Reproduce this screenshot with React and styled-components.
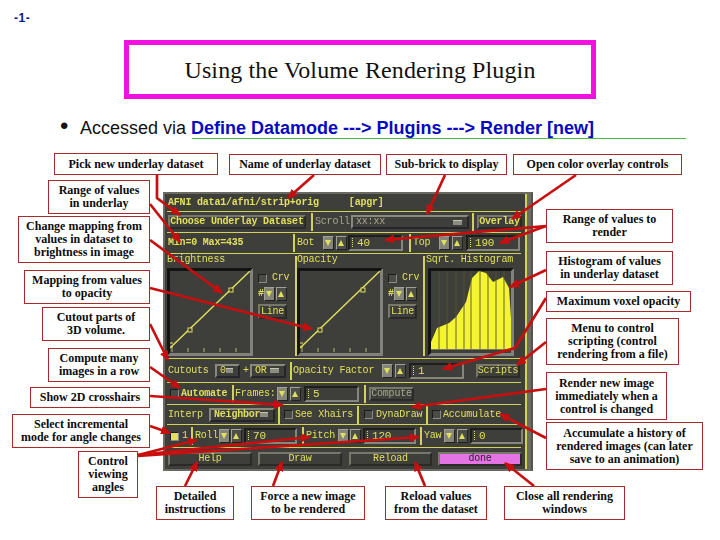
import React from "react";
import styled, { createGlobalStyle } from "styled-components";

const panelYellow = "#e0e05c";
const ruleYellow = "#d2d25a";
const panelBg = "#3e3e3a";
const arrowRed = "#c80f0f";
const boxRed = "#a82a2a";

const GlobalStyle = createGlobalStyle`
  html, body { margin: 0; padding: 0; background: #fff; }
`;

const Slide = styled.div`
  position: relative;
  width: 720px;
  height: 540px;
  overflow: hidden;
  background: #fff;
`;

const PageNumber = styled.div`
  height: 14px;
  padding: 11px 0 0 14px;
  font: bold 12px/14px "Liberation Sans", sans-serif;
  letter-spacing: 0.5px;
  color: #14148c;
`;

const TitleBox = styled.h1`
  box-sizing: border-box;
  width: 472px;
  height: 59px;
  margin: 15px 0 0 124px;
  border: 5px solid #f010e0;
  display: flex;
  align-items: center;
  justify-content: center;
  font: normal 24px/1 "Liberation Serif", serif;
  letter-spacing: 0.12px;
  color: #111;
`;

const BulletLine = styled.div`
  display: flex;
  align-items: baseline;
  height: 24px;
  margin: 15px 0 0 60px;
  font: 18px/24px "Liberation Sans", sans-serif;
  color: #111;
  white-space: pre;
`;

const Bullet = styled.span`
  width: 20px;
  font-size: 24px;
`;

const Path = styled.b`
  color: #0808c0;
`;

const GreenRule = styled.div`
  width: 494px;
  height: 1px;
  margin: 0 0 0 192px;
  background: #44c044;
`;

const Panel = styled.div`
  box-sizing: border-box;
  display: flex;
  width: 370px;
  height: 279px;
  margin: 53px 0 0 163px;
  border: 2px solid #6a6a62;
  border-right: 2px solid #55554e;
  background: ${panelBg};
  color: ${panelYellow};
  font: 10px/12px "Liberation Mono", monospace;
  letter-spacing: -0.2px;
  filter: blur(0.35px);
`;

const PanelBody = styled.div`
  width: 362px;
`;

const Rail = styled.div`
  width: 4px;
  border-left: 2px solid ${ruleYellow};
  background: #6c6c64;
`;

const Row = styled.div`
  display: flex;
  align-items: center;
  height: ${(p) => p.$h}px;
  white-space: pre;
`;

const Rule = styled.div`
  height: 1px;
  margin: 0 4px 0 2px;
  background: ${ruleYellow};
`;

const VSep = styled.div`
  flex: none;
  width: 2px;
  height: ${(p) => p.$h || 18}px;
  margin-left: ${(p) => p.$ml || 0}px;
  background: ${ruleYellow};
`;

const Label = styled.span`
  flex: none;
  width: ${(p) => (p.$w ? `${p.$w}px` : "auto")};
  margin-left: ${(p) => p.$ml || 0}px;
  color: ${(p) => (p.$dim ? "#a8a890" : panelYellow)};
  font-weight: ${(p) => (p.$bold ? "bold" : "normal")};
`;

const Button = styled.div`
  box-sizing: border-box;
  border: 2px solid;
  border-color: #77776c #2a2a28 #2a2a28 #77776c;
  flex: none;
  display: flex;
  align-items: center;
  justify-content: center;
  width: ${(p) => p.$w}px;
  height: ${(p) => p.$h || 14}px;
  margin-left: ${(p) => p.$ml || 0}px;
  background: ${(p) => (p.$pink ? "#e474e4" : panelBg)};
  color: ${(p) => (p.$pink ? "#2c2030" : p.$dim ? "#a8a890" : panelYellow)};
  font-weight: ${(p) => (p.$bold ? "bold" : "normal")};
`;

const Dropdown = styled(Button)`
  justify-content: space-between;
  padding: 0 5px 0 3px;
  border-color: #8a8a7c #26262a #26262a #8a8a7c;
`;

const DropMark = styled.i`
  width: 9px;
  height: 4px;
  background: #8c8c80;
  border-top: 1px solid #c4c4b4;
`;

const Spinner = styled.div`
  flex: none;
  position: relative;
  box-sizing: border-box;
  width: 11px;
  height: 14px;
  margin-left: ${(p) => p.$ml || 0}px;
  background: ${(p) => (p.$up ? "#4e4e48" : "#85857a")};
  border: 1px solid;
  border-color: #a0a094 #222 #222 #a0a094;
  &::after {
    content: "";
    position: absolute;
    left: 1px;
    top: 3px;
    border-left: 3.5px solid transparent;
    border-right: 3.5px solid transparent;
    ${(p) =>
      p.$up
        ? `border-bottom: 6px solid ${panelYellow};`
        : `border-top: 6px solid ${panelYellow};`}
  }
`;

const Field = styled.div`
  flex: none;
  box-sizing: border-box;
  width: ${(p) => p.$w}px;
  height: 16px;
  margin-left: ${(p) => p.$ml || 0}px;
  padding-left: 2px;
  border: 2px solid;
  border-color: #1e1e1c #86867c #86867c #1e1e1c;
  line-height: 12px;
  font-size: 11px;
  &::before {
    content: "";
    display: inline-block;
    height: 9px;
    margin-right: 4px;
    border-left: 1px dotted ${panelYellow};
    vertical-align: -1px;
  }
`;

const CheckBox = styled.div`
  flex: none;
  box-sizing: border-box;
  width: 9px;
  height: 9px;
  margin-left: ${(p) => p.$ml || 0}px;
  border: 1px solid;
  border-color: #1c1c1a #8a8a80 #8a8a80 #1c1c1a;
  background: ${(p) => (p.$on ? panelYellow : "#4a4a46")};
`;

const GraphRow = styled.div`
  display: flex;
  height: 104px;
`;

const GraphCol = styled.div`
  flex: none;
  display: flex;
  flex-direction: column;
  justify-content: flex-end;
  margin-left: ${(p) => p.$ml || 0}px;
  padding-bottom: 2px;
`;

const GraphTitle = styled.div`
  height: 14px;
  margin-left: ${(p) => p.$ml || 0}px;
`;

const GraphBox = styled.div`
  box-sizing: border-box;
  width: 86px;
  height: 88px;
  border: 3px solid;
  border-color: #141412 #82827c #82827c #141412;
  svg {
    display: block;
  }
`;

const GraphControls = styled.div`
  flex: none;
  display: flex;
  flex-direction: column;
  gap: 5px;
  width: ${(p) => p.$w}px;
  margin-left: 5px;
  padding-top: 19px;
`;

const ControlLine = styled.div`
  display: flex;
  align-items: center;
  height: ${(p) => p.$h || 10}px;
`;

const GraphSep = styled(VSep)`
  height: 100px;
  align-self: center;
`;

const ArrowLayer = styled.svg`
  position: absolute;
  left: 0;
  top: 0;
  pointer-events: none;
`;

const Callout = styled.div`
  position: absolute;
  left: ${(p) => p.$x}px;
  top: ${(p) => p.$y}px;
  box-sizing: border-box;
  width: ${(p) => p.$w}px;
  height: ${(p) => p.$h}px;
  display: flex;
  align-items: center;
  justify-content: center;
  border: 1.5px solid ${boxRed};
  background: #fff;
  font: bold 12px/13px "Liberation Serif", serif;
  color: #0c0c0c;
  text-align: center;
  white-space: pre;
`;

const callouts = [
  [54, 153, 164, 22, "Pick new underlay dataset"],
  [229, 154, 152, 21, "Name of underlay dataset"],
  [386, 154, 121, 21, "Sub-brick to display"],
  [513, 154, 169, 21, "Open color overlay controls"],
  [48, 180, 102, 34, "Range of values\nin underlay"],
  [18, 216, 132, 47, "Change mapping from\nvalues in dataset to\nbrightness in image"],
  [24, 270, 126, 34, "Mapping from values\nto opacity"],
  [42, 307, 108, 34, "Cutout parts of\n3D volume."],
  [48, 348, 102, 34, "Compute many\nimages in a row"],
  [30, 387, 120, 21, "Show 2D crosshairs"],
  [12, 414, 138, 34, "Select incremental\nmode for angle changes"],
  [78, 451, 60, 47, "Control\nviewing\nangles"],
  [156, 486, 78, 34, "Detailed\ninstructions"],
  [251, 486, 114, 34, "Force a new image\nto be rendered"],
  [385, 486, 102, 34, "Reload values\nfrom the dataset"],
  [504, 486, 121, 34, "Close all rendering\nwindows"],
  [546, 209, 127, 34, "Range of values to\nrender"],
  [546, 251, 127, 34, "Histogram of values\nin underlay dataset"],
  [546, 291, 145, 21, "Maximum voxel opacity"],
  [546, 318, 133, 47, "Menu to control\nscripting (control\nrendering from a file)"],
  [546, 372, 121, 48, "Render new image\nimmediately when a\ncontrol is changed"],
  [546, 422, 157, 48, "Accumulate a history of\nrendered images (can later\nsave to an animation)"],
];

const arrows = [
  "157,175 157,198 180,215",
  "314,175 288,198",
  "445,175 427,214",
  "576,175 512,219",
  "150,204 180,242",
  "150,240 222,293",
  "150,288 312,329",
  "150,324 168,360",
  "150,367 180,388",
  "150,396 283,405",
  "150,426 170,433",
  "138,455 197,440",
  "138,455 310,437",
  "138,456 419,437",
  "185,486 197,462",
  "273,486 282,462",
  "425,486 415,462",
  "534,486 505,463",
  "546,438 500,414",
  "546,389 412,407",
  "546,342 517,365",
  "546,298 515,348 443,369",
  "546,270 510,287",
  "546,226 385,240",
  "546,226 500,243",
];

const ticks = [2, 18, 34, 50, 66];

const RampGraph = ({ handles }) => (
  <svg width="80" height="82" viewBox="0 0 80 82">
    <path d="M0 77 L80 0" stroke={panelYellow} strokeWidth="1.4" fill="none" />
    {handles.map(([x, y]) => (
      <rect key={x} x={x - 2} y={y - 2} width="4" height="4" fill={panelBg} stroke={panelYellow} />
    ))}
    {ticks.map((x) => (
      <path key={x} d={`M${x} 77 V81`} stroke="#b8b860" />
    ))}
    <path d="M0 72 L3 72 M0 76 L3 76" stroke={panelYellow} />
  </svg>
);

const histogramLines = [8, 16, 25, 33, 40, 49, 57, 65, 73];

const HistogramGraph = () => (
  <svg width="80" height="82" viewBox="0 0 80 82">
    <path
      d="M0 71 L6 57 L18 52 L25 46 L35 31 L41 7 L48 0 L55 2 L62 11 L72 6 L78 17 L80 47 L80 78 L0 78 Z"
      fill="#f4f430"
    />
    {histogramLines.map((x) => (
      <path key={x} d={`M${x} 0 V78`} stroke="#55552c" strokeWidth="0.9" />
    ))}
    <path d={`M0 78.5 H80`} stroke="#77776c" />
  </svg>
);

const RampControls = ({ w }) => (
  <GraphControls $w={w}>
    <ControlLine>
      <CheckBox />
      <Label $ml={5}>Crv</Label>
    </ControlLine>
    <ControlLine $h={11}>
      <Label $w={6} $bold>
        #
      </Label>
      <Spinner />
      <Spinner $up $ml={1} />
    </ControlLine>
    <ControlLine $h={15}>
      <Button $w={29} $h={15}>
        Line
      </Button>
    </ControlLine>
  </GraphControls>
);

const App = () => (
  <Slide>
    <GlobalStyle />
    <PageNumber>-1-</PageNumber>
    <TitleBox>Using the Volume Rendering Plugin</TitleBox>
    <BulletLine>
      <Bullet>•</Bullet>
      Accessed via <Path>Define Datamode ---&gt; Plugins ---&gt; Render [new]</Path>
    </BulletLine>
    <GreenRule />

    <Panel>
      <PanelBody>
        <Row $h={17}>
          <Label $ml={3} $bold>
            AFNI data1/afni/strip+orig
          </Label>
          <Label $ml={30} $bold>
            [apgr]
          </Label>
        </Row>
        <Rule />
        <Row $h={20}>
          <Button $ml={3} $w={138} $bold>
            Choose Underlay Dataset
          </Button>
          <VSep $ml={5} />
          <Label $ml={2} $w={36} $dim>
            Scroll
          </Label>
          <Dropdown $w={118} $dim>
            xx:xx
            <DropMark />
          </Dropdown>
          <VSep $ml={3} />
          <Button $ml={3} $w={45} $bold>
            Overlay
          </Button>
        </Row>
        <Rule />
        <Row $h={20}>
          <Label $ml={3} $w={125} $bold>
            Min=0 Max=435
          </Label>
          <VSep />
          <Label $ml={2} $w={26}>
            Bot
          </Label>
          <Spinner />
          <Spinner $up $ml={2} />
          <Field $ml={1} $w={55}>
            40
          </Field>
          <VSep $ml={6} />
          <Label $ml={2} $w={26}>
            Top
          </Label>
          <Spinner />
          <Spinner $up $ml={2} />
          <Field $ml={3} $w={54}>
            190
          </Field>
        </Row>
        <Rule />
        <GraphRow>
          <GraphCol $ml={2}>
            <GraphTitle>Brightness</GraphTitle>
            <GraphBox>
              <RampGraph handles={[[20, 59], [61, 19]]} />
            </GraphBox>
          </GraphCol>
          <RampControls w={37} />
          <GraphSep />
          <GraphCol>
            <GraphTitle>Opacity</GraphTitle>
            <GraphBox>
              <RampGraph handles={[[20, 59], [63, 19]]} />
            </GraphBox>
          </GraphCol>
          <RampControls w={33} />
          <GraphSep $ml={2} />
          <GraphCol $ml={3}>
            <GraphTitle $ml={-2}>Sqrt. Histogram</GraphTitle>
            <GraphBox>
              <HistogramGraph />
            </GraphBox>
          </GraphCol>
        </GraphRow>
        <Rule />
        <Row $h={23}>
          <Label $ml={3} $w={47}>
            Cutouts
          </Label>
          <Dropdown $w={25}>
            0<DropMark />
          </Dropdown>
          <Label $ml={3} $w={7}>
            +
          </Label>
          <Dropdown $w={36}>
            OR
            <DropMark />
          </Dropdown>
          <VSep $ml={4} />
          <Label $ml={1} $w={89}>
            Opacity Factor
          </Label>
          <Spinner />
          <Spinner $up $ml={2} />
          <Field $ml={3} $w={55}>
            1
          </Field>
          <Button $ml={12} $w={44}>
            Scripts
          </Button>
        </Row>
        <Rule />
        <Row $h={21}>
          <CheckBox $ml={5} />
          <Label $ml={2} $w={51} $bold>
            Automate
          </Label>
          <VSep />
          <Label $ml={1} $w={42}>
            Frames:
          </Label>
          <Spinner />
          <Spinner $up $ml={2} />
          <Field $ml={3} $w={55}>
            5
          </Field>
          <VSep $ml={5} />
          <Button $ml={3} $w={45} $dim>
            Compute
          </Button>
        </Row>
        <Rule />
        <Row $h={19}>
          <Label $ml={3} $w={41}>
            Interp
          </Label>
          <Dropdown $w={66} $bold>
            Neighbor
            <DropMark />
          </Dropdown>
          <VSep $ml={3} />
          <CheckBox $ml={4} />
          <Label $ml={2} $w={61}>
            See Xhairs
          </Label>
          <VSep $ml={1} />
          <CheckBox $ml={5} />
          <Label $ml={3} $w={49}>
            DynaDraw
          </Label>
          <VSep $ml={1} />
          <CheckBox $ml={4} />
          <Label $ml={2}>Accumulate</Label>
        </Row>
        <Rule />
        <Row $h={22}>
          <CheckBox $on $ml={5} />
          <Label $ml={3} $w={9}>
            1
          </Label>
          <VSep />
          <Label $ml={2} $w={24}>
            Roll
          </Label>
          <Spinner />
          <Spinner $up $ml={1} />
          <Field $ml={2} $w={53}>
            70
          </Field>
          <VSep $ml={5} />
          <Label $ml={2} $w={32}>
            Pitch
          </Label>
          <Spinner />
          <Spinner $up $ml={1} />
          <Field $ml={2} $w={53}>
            120
          </Field>
          <VSep $ml={4} />
          <Label $ml={2} $w={20}>
            Yaw
          </Label>
          <Spinner />
          <Spinner $up $ml={2} />
          <Field $ml={2} $w={53}>
            0
          </Field>
        </Row>
        <Rule />
        <Row $h={21}>
          <Button $ml={3} $w={84}>
            Help
          </Button>
          <Button $ml={6} $w={84}>
            Draw
          </Button>
          <Button $ml={7} $w={83}>
            Reload
          </Button>
          <Button $ml={6} $w={84} $pink>
            done
          </Button>
        </Row>
      </PanelBody>
      <Rail />
    </Panel>

    <ArrowLayer width="720" height="540" viewBox="0 0 720 540">
      <defs>
        <marker id="head" markerUnits="userSpaceOnUse" markerWidth="10" markerHeight="9" refX="9" refY="4.5" orient="auto">
          <path d="M0 0 L10 4.5 L0 9 Z" fill={arrowRed} />
        </marker>
      </defs>
      {arrows.map((points) => (
        <polyline
          key={points}
          points={points}
          fill="none"
          stroke={arrowRed}
          strokeWidth="2.7"
          markerEnd="url(#head)"
        />
      ))}
    </ArrowLayer>

    {callouts.map(([x, y, w, h, text]) => (
      <Callout key={text} $x={x} $y={y} $w={w} $h={h}>
        {text}
      </Callout>
    ))}
  </Slide>
);

export default App;
